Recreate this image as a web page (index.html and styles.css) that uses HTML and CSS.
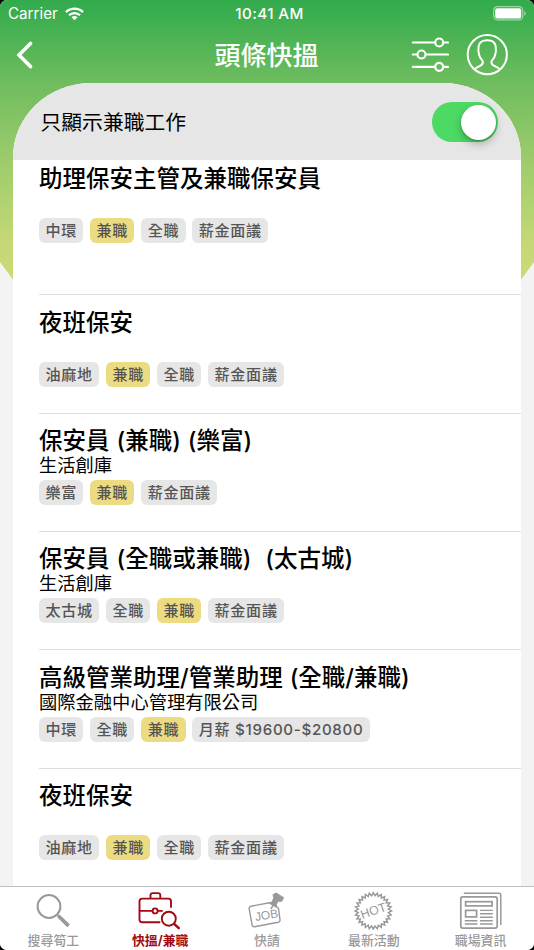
FILE: index.html
```html
<!DOCTYPE html>
<html lang="zh-Hant">
<head>
    <meta charset="UTF-8">
    <meta name="viewport" content="width=device-width, initial-scale=1.0">
    <title>頭條快搵</title>
    <link rel="stylesheet" href="styles.css">
</head>
<body>
    <div class="phone">
        <div class="backdrop"></div>

        <div class="status-bar">
            <div class="carrier">
                <span>Carrier</span>
                <svg class="wifi" width="19" height="14" viewBox="0 0 19 14" fill="none" stroke="#fff" stroke-width="2.3">
                    <path d="M1 5.1a12.2 12.2 0 0 1 17 0"/>
                    <path d="M4 8.3a7.8 7.8 0 0 1 11 0"/>
                    <path d="M9.5 13.3L6.5 10.3a4.2 4.2 0 0 1 6 0z" fill="#fff" stroke="none"/>
                </svg>
            </div>
            <div class="time">10:41 AM</div>
            <svg class="battery" width="34" height="15" viewBox="0 0 34 15">
                <rect x="0.7" y="0.7" width="29" height="13.2" rx="3.6" fill="none" stroke="#fff" stroke-opacity="0.5" stroke-width="1.2"/>
                <rect x="2.2" y="2.2" width="26" height="10.2" rx="2" fill="#fff"/>
                <path d="M31.2 5v4.8q1.6-.7 1.6-2.4T31.2 5z" fill="#fff" fill-opacity="0.5"/>
            </svg>
        </div>

        <header class="nav">
            <div class="nav-left">
                <svg width="18" height="28" viewBox="0 0 18 28" fill="none" stroke="#fff" stroke-width="3.6" stroke-linecap="round" stroke-linejoin="miter">
                    <path d="M15.5 2.4L4 14l11.5 11.6"/>
                </svg>
            </div>
            <h1>頭條快搵</h1>
            <div class="nav-right">
                <svg width="38" height="36" viewBox="0 0 38 36" fill="none" stroke="#fff" stroke-width="2.2" stroke-linecap="round">
                    <path d="M1.8 5.5h21.7M33 5.5h4M1.8 17.5h4.4M15.5 17.5h21.5M1.8 29.8h21.7M33 29.8h4"/>
                    <circle cx="28.2" cy="5.5" r="4"/>
                    <circle cx="10.5" cy="17.5" r="4"/>
                    <circle cx="28.2" cy="29.8" r="4"/>
                </svg>
                <svg width="42" height="42" viewBox="0 0 42 42" fill="none" stroke="#fff" stroke-width="2">
                    <circle cx="21.3" cy="20.6" r="19.6"/>
                    <path d="M8.4 35.4c2.2-2.2 5.5-3 7.3-4.7 1.6-1.6 1.3-3.7-.2-5.4-1.3-1.5-2-2.7-2.4-4.6-1-3-.9-5.5-.5-8.4C13.3 7.8 16.5 6.3 21.3 6.3s7.7 1.5 8.4 6c.4 2.9.5 5.4-.5 8.4-.4 1.9-1.1 3.1-2.4 4.6-1.5 1.7-1.8 3.8-.2 5.4 1.8 1.7 5.1 2.5 7.3 4.7"/>
                </svg>
            </div>
        </header>

        <main class="sheet">
            <div class="filter">
                <span class="filter-label">只顯示兼職工作</span>
                <div class="switch"><div class="knob"></div></div>
            </div>

            <div class="jobs">
                <div class="job job-first">
                    <h2>助理保安主管及兼職保安員</h2>
                    <p class="company"></p>
                    <div class="tags">
                        <span class="tag">中環</span>
                        <span class="tag part-time">兼職</span>
                        <span class="tag">全職</span>
                        <span class="tag">薪金面議</span>
                    </div>
                </div>
                <div class="job">
                    <h2>夜班保安</h2>
                    <p class="company"></p>
                    <div class="tags">
                        <span class="tag">油麻地</span>
                        <span class="tag part-time">兼職</span>
                        <span class="tag">全職</span>
                        <span class="tag">薪金面議</span>
                    </div>
                </div>
                <div class="job">
                    <h2>保安員 (兼職) (樂富)</h2>
                    <p class="company">生活創庫</p>
                    <div class="tags">
                        <span class="tag">樂富</span>
                        <span class="tag part-time">兼職</span>
                        <span class="tag">薪金面議</span>
                    </div>
                </div>
                <div class="job">
                    <h2>保安員 (全職或兼職)&nbsp; (太古城)</h2>
                    <p class="company">生活創庫</p>
                    <div class="tags">
                        <span class="tag">太古城</span>
                        <span class="tag">全職</span>
                        <span class="tag part-time">兼職</span>
                        <span class="tag">薪金面議</span>
                    </div>
                </div>
                <div class="job">
                    <h2>高級管業助理/管業助理 (全職/兼職)</h2>
                    <p class="company">國際金融中心管理有限公司</p>
                    <div class="tags">
                        <span class="tag">中環</span>
                        <span class="tag">全職</span>
                        <span class="tag part-time">兼職</span>
                        <span class="tag">月薪 $19600-$20800</span>
                    </div>
                </div>
                <div class="job">
                    <h2>夜班保安</h2>
                    <p class="company"></p>
                    <div class="tags">
                        <span class="tag">油麻地</span>
                        <span class="tag part-time">兼職</span>
                        <span class="tag">全職</span>
                        <span class="tag">薪金面議</span>
                    </div>
                </div>
            </div>
        </main>

        <nav class="tab-bar">
            <div class="tab">
                <svg width="44" height="40" viewBox="0 0 44 40" fill="none" stroke="#999">
                    <circle cx="18" cy="16.5" r="11.4" stroke-width="2"/>
                    <path d="M26.3 24.8l1.7 1.7" stroke-width="2"/>
                    <path d="M27.5 26L37.6 35.8" stroke-width="3.8"/>
                </svg>
                <span>搜尋筍工</span>
            </div>
            <div class="tab active">
                <svg width="44" height="40" viewBox="0 0 44 40" fill="none" stroke="#a10a14" stroke-width="1.9" stroke-linecap="round">
                    <path d="M12.5 7.8V5.3q0-2.2 2.2-2.2h5.4q2.2 0 2.2 2.2v2.5"/>
                    <path d="M21.5 32.2H4.3q-2.8 0-2.8-2.8V11.4q0-2.8 2.8-2.8h26.1q2.6 0 2.6 2.8V17"/>
                    <path d="M1.8 20.9h12.4M20 20.9h4"/>
                    <circle cx="17.1" cy="20.9" r="2.5"/>
                    <circle cx="30.8" cy="28.7" r="7"/>
                    <path d="M36.4 34.2l4.4 4" stroke-width="2.5"/>
                </svg>
                <span>快搵/兼職</span>
            </div>
            <div class="tab">
                <svg width="44" height="40" viewBox="0 0 44 40" fill="none" stroke="#999" stroke-width="1.4">
                    <path d="M24.5 12.8L6 16.2q-2.2.5-1.8 2.7l2.9 16.2q.5 2 2.5 1.6l23.6-4.4q2.2-.5 1.8-2.7L33.4 18" stroke-linecap="round"/>
                    <text class="icon-job" transform="rotate(-9 21 26)" x="10" y="29.3" fill="#999" stroke="none">JOB</text>
                    <path d="M31.2 3.4l7 4.3-1.6 3.2-3.4-.2-2.3 3.4 1 3.2-7-4 2.5-1.5 1.7-4-.8-3z" fill="#999"/>
                    <path d="M28.4 15l-2.6 4"/>
                </svg>
                <span>快請</span>
            </div>
            <div class="tab">
                <svg width="44" height="40" viewBox="0 0 44 40">
                    <path id="burst" fill="none" stroke="#999" stroke-width="1.5"/>
                    <text class="icon-hot" transform="rotate(-19 21.3 21)" x="8.2" y="25" fill="#999">HOT</text>
                </svg>
                <span>最新活動</span>
            </div>
            <div class="tab">
                <svg width="44" height="40" viewBox="0 0 44 40" fill="none" stroke="#999" stroke-width="1.7">
                    <path d="M4.8 3.2H40q1.8 0 1.8 1.8v30" stroke-width="1.5"/>
                    <rect x="1.8" y="6.9" width="36.4" height="31.2" rx="2"/>
                    <rect x="6.6" y="11.7" width="26.5" height="4.2"/>
                    <rect x="6.6" y="20.4" width="11" height="6.5"/>
                    <path d="M21 20.4h12.8M21 23.7h12.8M21 27.2h12.8M5.8 30.7h12.6M21 30.7h12.8M5.8 34h12.6M21 34h12.8" stroke-width="1.4"/>
                </svg>
                <span>職場資訊</span>
            </div>
        </nav>
    </div>

    <script>
        // zigzag ring around the HOT label
        const points = [];
        const teeth = 28;
        for (let i = 0; i < teeth * 2; i++) {
            const r = i % 2 ? 15.2 : 18.2;
            const a = Math.PI * i / teeth;
            points.push((21.3 + r * Math.sin(a)).toFixed(2) + ' ' + (20.9 - r * Math.cos(a)).toFixed(2));
        }
        document.getElementById('burst').setAttribute('d', 'M' + points.join('L') + 'Z');
    </script>
</body>
</html>
```
FILE: styles.css
```css
* {
    box-sizing: border-box;
}

body {
    margin: 0;
    background: #000;
    font-family: Inter, "Noto Sans CJK TC", sans-serif;
    color: #000;
}

h1, h2, p {
    margin: 0;
}

svg {
    display: block;
    flex: none;
}

.phone {
    position: relative;
    display: flex;
    flex-direction: column;
    width: 534px;
    height: 950px;
    background: #f3f3f3;
    border-radius: 7px;
    overflow: hidden;
}

/* green area behind the sheet, pointed towards the bottom */
.backdrop {
    position: absolute;
    top: 0;
    left: 0;
    width: 100%;
    height: 300px;
    background: linear-gradient(#33ab4c 0, #37ad4e 10px, #6dbc5e 80px, #9ccb6b 158px, #c3d875 240px, #ccda77 281px);
    clip-path: polygon(0 0, 100% 0, 100% 262px, 520px 281px, 14px 281px, 0 262px);
}

.status-bar {
    position: relative;
    display: grid;
    grid-template-columns: 1fr auto 1fr;
    align-items: center;
    height: 27px;
    padding: 0 7px 0 8px;
    color: #fff;
    font-size: 15.2px;
}

.carrier {
    display: flex;
    align-items: center;
    gap: 7px;
}

.time {
    padding-left: 4px;
    font-weight: 500;
    letter-spacing: 0.4px;
}

.battery {
    justify-self: end;
}

.nav {
    position: relative;
    display: grid;
    grid-template-columns: 1fr auto 1fr;
    align-items: center;
    height: 56px;
    padding: 0 26px 0 15px;
    color: #fff;
}

.nav h1 {
    font-size: 26px;
    font-weight: 500;
    line-height: 30px;
    padding: 1px 0 0 10px;
}

.nav-right {
    display: flex;
    justify-content: flex-end;
    align-items: center;
    gap: 17px;
}

.sheet {
    position: relative;
    flex: 1;
    min-height: 0;
    width: 508px;
    margin: 0 auto;
    background: #fff;
    border-radius: 78px 78px 0 0 / 74px 74px 0 0;
    overflow: hidden;
}

.filter {
    display: flex;
    justify-content: space-between;
    align-items: center;
    height: 77px;
    padding: 0 23px 0 27.5px;
    background: #e6e6e6;
}

.filter-label {
    padding-bottom: 2px;
    font-size: 20.8px;
}

.switch {
    display: flex;
    justify-content: flex-end;
    width: 66px;
    height: 40px;
    padding: 2.5px;
    margin-top: 1px;
    border-radius: 20px;
    background: #4cd964;
}

.knob {
    width: 35px;
    height: 35px;
    border-radius: 50%;
    background: #fff;
    box-shadow: 0 4px 8px rgba(0, 0, 0, 0.25), 0 1px 2px rgba(0, 0, 0, 0.2);
}

.jobs {
    padding-left: 26px;
}

.job {
    height: 118.3px;
    padding-top: 11.4px;
    border-bottom: 1px solid #dedede;
}

.job-first {
    height: 135.4px;
    padding-top: 3px;
}

.job h2 {
    height: 31px;
    font-size: 23.5px;
    font-weight: 500;
    line-height: 32px;
    word-spacing: 0.7px;
    white-space: nowrap;
}

.company {
    height: 20px;
    font-size: 18.3px;
    line-height: 18px;
}

.tags {
    display: flex;
    gap: 6.7px;
    padding-top: 4px;
}

.tag {
    height: 25px;
    padding: 0 6.3px 0 6.5px;
    border-radius: 6px;
    background: #e6e6e6;
    color: #555;
    font-size: 15.1px;
    font-weight: 500;
    letter-spacing: 0.7px;
    line-height: 25px;
    white-space: nowrap;
}

.part-time {
    background: #ecdb81;
}

.tab-bar {
    position: relative;
    display: grid;
    grid-template-columns: repeat(5, 1fr);
    height: 64px;
    background: #fff;
    border-top: 1px solid #bfbfbf;
}

.tab {
    display: flex;
    flex-direction: column;
    align-items: center;
    padding-top: 3px;
    color: #999;
    font-size: 12.9px;
    font-weight: 500;
    line-height: 21px;
}

.active {
    color: #a10a14;
    font-weight: 700;
}

.icon-job {
    font: 12px "Liberation Sans", Arial, sans-serif;
}

.icon-hot {
    font: 12.5px "Liberation Sans", Arial, sans-serif;
}
```
